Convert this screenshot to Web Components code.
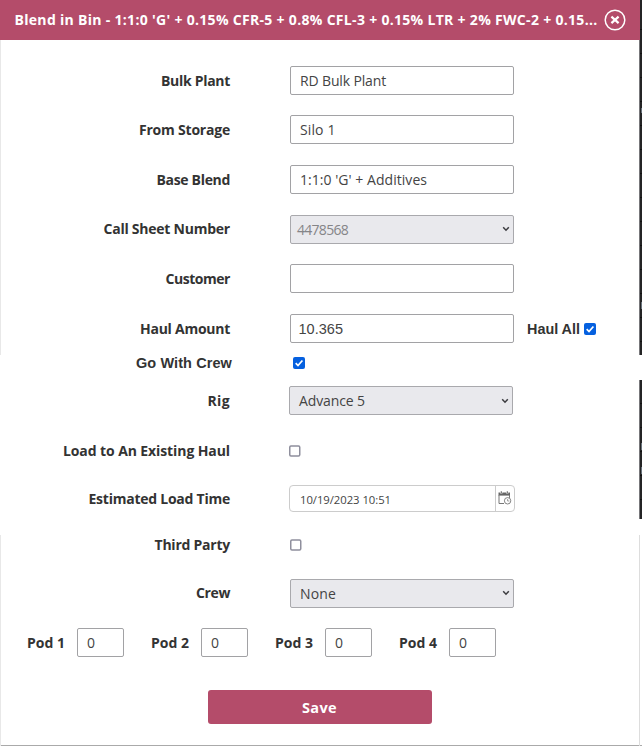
<!DOCTYPE html>
<html lang="en">
<head>
<meta charset="utf-8">
<title>Blend in Bin</title>
<style>
html,body{margin:0;padding:0;background:#fff;overflow:hidden}
body{width:642px;height:746px;font-family:"Open Sans","Noto Sans",sans-serif;color:#333}
</style>
</head>
<body>
<haul-dialog></haul-dialog>
<script>
const root = (el, html) => { const r = el.attachShadow({mode:'open'}); const t = document.createElement('template'); t.innerHTML = html; r.append(t.content.cloneNode(true)); return r; };

/* A single line of text whose tracking is adjusted to a given width. */
class FitText extends HTMLElement {
  connectedCallback() {
    const r = root(this, `<style>:host{display:inline-block;white-space:pre;line-height:20px;flex:none}span{display:inline-block}</style><span><slot></slot></span>`);
    const s = r.querySelector('span'), w = +this.getAttribute('w'), n = this.textContent.length;
    if (w) { const d = (w - s.getBoundingClientRect().width) / n; s.style.letterSpacing = d.toFixed(3) + 'px'; }
  }
}

class FormRow extends HTMLElement {
  connectedCallback() {
    root(this, `<style>
      :host{display:grid;grid-template-columns:230px 1fr;column-gap:60px;height:29px;align-items:center}
      .l{display:flex;justify-content:flex-end;font-weight:700;font-size:var(--fs,14px);color:#333;padding-top:var(--dy,0px);margin-right:var(--mr,0px)}
      .v{display:flex;align-items:center;margin-left:var(--ml,0px)}
    </style><div class="l"><fit-text w="${this.getAttribute('w')}">${this.getAttribute('label')}</fit-text></div><div class="v"><slot></slot></div>`);
  }
}

class TextField extends HTMLElement {
  connectedCallback() {
    root(this, `<style>
      :host{display:flex;align-items:center;box-sizing:border-box;width:var(--w,224px);height:29px;border:1px solid #a2a2a5;border-radius:2px;padding:1px 0 0 9px;background:#fff;font-size:14px;color:#444;flex:none}
    </style><slot></slot>`);
  }
}

class SelectField extends HTMLElement {
  connectedCallback() {
    root(this, `<style>
      :host{display:flex;align-items:center;justify-content:space-between;box-sizing:border-box;width:224px;height:29px;border:1px solid #a9a9ad;border-radius:2px;padding:1px 3px 0 9px;background:#e9e9ed;font-size:14px;color:#444;flex:none}
      :host([disabled]){color:#858588;padding-left:6px}
      svg{margin-top:-1px}
    </style><slot></slot><svg width="8" height="6" viewBox="0 0 8 6"><path d="M1.2 1.2L4 4.2L6.8 1.2" fill="none" stroke="#3c3c40" stroke-width="1.5"/></svg>`);
  }
}

class CheckBox extends HTMLElement {
  connectedCallback() {
    const on = this.hasAttribute('checked');
    root(this, `<style>:host{display:block;width:12px;height:12px;flex:none}svg{display:block}</style>` + (on
      ? `<svg width="12" height="12"><rect width="12" height="12" rx="2" fill="#0560df"/><path d="M2.7 6.2L5 8.5L9.4 3.5" fill="none" stroke="#fff" stroke-width="1.7"/></svg>`
      : `<svg width="12" height="12"><rect x=".75" y="1" width="10" height="10" rx="1.2" fill="#fff" stroke="#8f8f9d" stroke-width="1.5"/></svg>`));
  }
}

class DateField extends HTMLElement {
  connectedCallback() {
    root(this, `<style>
      :host{display:flex;box-sizing:border-box;width:226px;height:27px;border:1px solid #ccc;border-radius:4px;background:#fff;font-size:11.3px;color:#444}
      .t{flex:1;display:flex;align-items:center;padding:2px 0 0 10px}
      .i{width:18px;border-left:1px solid #ccc;display:flex;align-items:center;justify-content:center;padding-bottom:1px}
    </style><div class="t"><slot></slot></div><div class="i"><svg width="14" height="14" viewBox="0 0 14 14">
      <path d="M.5 1.5H12V4.6H.5Z" fill="#666"/><path d="M3.3 0V2.6M9.3 0V2.6" stroke="#fff" stroke-width="2.2"/><path d="M3.3 .2V2.2M9.3 .2V2.2" stroke="#666" stroke-width="1.1"/>
      <path d="M1 4V12.5H6M11.5 4V7" fill="none" stroke="#777"/><circle cx="9.6" cy="9.8" r="3.2" fill="#fff" stroke="#777" stroke-width=".9"/><path d="M9.6 8V10H11.4" fill="none" stroke="#888" stroke-width=".8"/></svg></div>`);
  }
}

class PodField extends HTMLElement {
  connectedCallback() {
    root(this, `<style>
      :host{display:flex;align-items:center;width:124px;height:29px;font-weight:700;font-size:14px}
      .l{width:50px;flex:none}text-field{--w:47px;font-weight:400}
    </style><div class="l"><fit-text w="38">${this.getAttribute('label')}</fit-text></div><text-field><fit-text w="8.4"><slot></slot></fit-text></text-field>`);
  }
}

class DialogHeader extends HTMLElement {
  connectedCallback() {
    root(this, `<style>
      :host{display:flex;align-items:center;box-sizing:border-box;height:40px;background:#b44c6a;color:#fff;padding:0 14px 0 14.5px;justify-content:space-between;font-size:14px;font-weight:700}
      svg{display:block}
    </style><slot></slot><svg width="22" height="22" viewBox="0 0 22 22"><circle cx="11" cy="11" r="9.8" fill="none" stroke="#fff" stroke-width="1.5"/><path d="M7.4 7.6L14.6 14.1M14.6 7.6L7.4 14.1" stroke="#fff" stroke-width="2.2"/></svg>`);
  }
}

/* Slivers of the dark page behind the dialog, visible on its right. */
class PageEdge extends HTMLElement {
  connectedCallback() {
    root(this, `<style>
      :host{display:grid;grid-template-rows:355px 25px 139px 16px 1fr;height:746px}
      .d{background:repeating-linear-gradient(#242425 0 23px,#111 23px 24px);border-left:1px solid #77777a}
      .a{background-position:0 6px}
      .f{border-left:1px solid #ddd}
      .a,.b{position:relative}
      i{position:absolute;left:1px;width:1px;height:7px;background:#69737c}
    </style><div class="d a"><i style="top:108px;height:5px"></i><i style="top:302px"></i></div><div></div><div class="d b"><i style="top:63px"></i><i style="top:87px"></i></div><div></div><div class="f"></div>`);
  }
}

class HaulDialog extends HTMLElement {
  connectedCallback() {
    root(this, `<style>
      :host{display:grid;grid-template-columns:639px 3px;width:642px;height:746px;box-sizing:border-box;border-bottom:1px solid #aaa}
      .main{display:grid;grid-template-columns:1px 638px;grid-template-rows:40px 706px}
      dialog-header{grid-column:1/3;margin-right:-1px;z-index:1}
      .edge{display:grid;grid-template-rows:315px 180px 211px}
      .edge b{background:#e8e8e8}.edge b:nth-child(2){background:none}
      .body{margin-left:-1px;padding-top:26px;display:grid;align-content:start;grid-template-rows:49px 50px 49.5px 49.5px 50px 34px 38px 50.5px 47.5px 46px 48.5px 49.5px 62px 34px}
      .ar{font-family:"Liberation Sans",Arial,sans-serif}
      .pods{display:flex;padding-left:27px}
      .save{margin-left:207.5px;width:224px;height:33.5px;border-radius:3px;background:#b44c6a;color:#fff;font-weight:700;font-size:14.5px;display:flex;justify-content:center;align-items:center;padding-top:3px;box-sizing:border-box}
      .hall{font-weight:700;color:#333;font-size:14.4px;margin:0 4px 0 13px}
    </style>
    <div class="main">
      <dialog-header><fit-text w="583">Blend in Bin - 1:1:0 'G' + 0.15% CFR-5 + 0.8% CFL-3 + 0.15% LTR + 2% FWC-2 + 0.15...</fit-text></dialog-header>
      <div class="edge"><b></b><b></b><b></b></div>
      <div class="body">
        <form-row label="Bulk Plant" w="69"><text-field><fit-text w="86">RD Bulk Plant</fit-text></text-field></form-row>
        <form-row label="From Storage" w="91" style="--dy:1px"><text-field><fit-text w="35.5">Silo 1</fit-text></text-field></form-row>
        <form-row label="Base Blend" w="73.5"><text-field><fit-text w="127">1:1:0 'G' + Additives</fit-text></text-field></form-row>
        <form-row label="Call Sheet Number" w="126.5"><select-field disabled><fit-text w="51">4478568</fit-text></select-field></form-row>
        <form-row label="Customer" w="64.5"><text-field></text-field></form-row>
        <form-row label="Haul Amount" w="90"><text-field class="ar" style="padding-left:7.5px;font-size:14.5px"><fit-text w="44.5">10.365</fit-text></text-field><fit-text class="ar hall" w="53">Haul All</fit-text><check-box checked></check-box></form-row>
        <form-row label="Go With Crew" w="96" class="ar" style="--mr:-2px;--ml:3px;--fs:14.5px"><check-box checked></check-box></form-row>
        <form-row label="Rig" w="22.5" style="--ml:-1px"><select-field><fit-text w="66">Advance 5</fit-text></select-field></form-row>
        <form-row label="Load to An Existing Haul" w="167" style="--ml:-1px"><check-box></check-box></form-row>
        <form-row label="Estimated Load Time" w="141.5" style="--ml:-1px;--dy:1px"><date-field><fit-text w="91">10/19/2023 10:51</fit-text></date-field></form-row>
        <form-row label="Third Party" w="75.5" style="--dy:-1px"><check-box></check-box></form-row>
        <form-row label="Crew" w="34"><select-field><fit-text w="36">None</fit-text></select-field></form-row>
        <div class="pods"><pod-field label="Pod 1">0</pod-field><pod-field label="Pod 2">0</pod-field><pod-field label="Pod 3">0</pod-field><pod-field label="Pod 4">0</pod-field></div>
        <div class="save"><fit-text w="35">Save</fit-text></div>
      </div>
    </div>
    <page-edge></page-edge>`);
  }
}
customElements.define('fit-text', FitText);
customElements.define('form-row', FormRow);
customElements.define('text-field', TextField);
customElements.define('select-field', SelectField);
customElements.define('check-box', CheckBox);
customElements.define('date-field', DateField);
customElements.define('pod-field', PodField);
customElements.define('dialog-header', DialogHeader);
customElements.define('page-edge', PageEdge);
customElements.define('haul-dialog', HaulDialog);
</script>
</body>
</html>
